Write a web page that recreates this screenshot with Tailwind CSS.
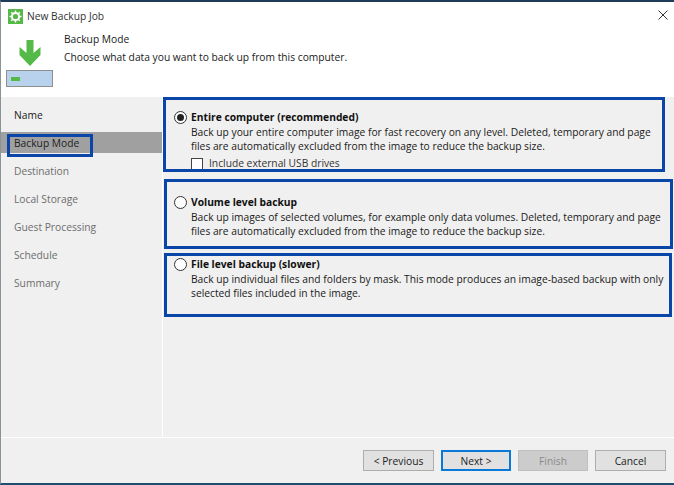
<!DOCTYPE html>
<html lang="en">
<head>
  <meta charset="UTF-8" />
  <title>New Backup Job</title>
  <script src="https://cdn.jsdelivr.net/npm/@tailwindcss/browser@4"></script>
</head>
<body class="m-0 bg-white text-[10.25px] leading-[15px] text-[#1a1a1a] font-['Open_Sans','Noto_Sans',sans-serif] overflow-hidden">
  <div class="relative w-[674px] h-[485px] flex flex-col border-t-[2px] border-t-[#1f3b57] border-b-[2px] border-b-[#1f4e6e] border-l border-l-[#8a929a] overflow-hidden">

    <!-- title + header -->
    <header class="h-[95px] shrink-0 bg-white relative">
      <div class="flex items-center gap-[4px] pl-[7px] pt-[6px]">
        <svg width="15" height="15" viewBox="0 0 15 15"><rect width="15" height="15" fill="#54b948"/><circle cx="7.5" cy="7.5" r="3.6" fill="none" stroke="#fff" stroke-width="2"/><path d="M7.5 1.5v2.5M7.5 11v2.5M1.5 7.5h2.5M11 7.5h2.5M3.2 3.2l1.8 1.8M10 10l1.8 1.8M11.8 3.200L10 5M5 10l-1.8 1.8" stroke="#fff" stroke-width="1.4"/></svg>
        <span class="text-[#333] pt-[1px]">New Backup Job</span>
      </div>
      <svg class="absolute right-[6px] top-[8px]" width="10" height="10" viewBox="0 0 10 10"><path d="M.5.5l9 9M9.5.5l-9 9" stroke="#333" fill="none"/></svg>
      <div class="flex mt-[7px]">
        <div class="w-[63px] pl-[5px] pt-[9px] shrink-0">
          <svg class="ml-[11px]" width="26" height="27" viewBox="0 0 26 27"><path d="M9.500 0h7v13l7-6v8L13 26 2.500 15V7l7 6z" fill="#54b948"/></svg>
          <div class="mt-[3px] w-[47px] h-[17px] bg-[#b8d1ec] border border-[#8f8f8f] flex items-center pl-[4px]"><span class="block w-[9px] h-[4px] bg-[#54b948]"></span></div>
        </div>
        <div>
          <div class="mt-[1px] h-[18px] text-[#222]">Backup Mode</div>
          <div class="text-[#222]">Choose what data you want to back up from this computer.</div>
        </div>
      </div>
    </header>

    <div class="flex flex-1 min-h-0 bg-[#f0f0f0]">
      <!-- steps -->
      <nav class="w-[161px] shrink-0 pt-[3px]">
        <div class="h-[28px] pt-[2px] pl-[13px] flex items-center text-[#222]">Name</div>
        <div class="h-[21px] mt-[4px] pt-[2px] pl-[13px] flex items-center text-[#222] bg-[#a0a0a0]">Backup Mode</div>
        <div class="h-[28px] mt-[4px] pl-[13px] flex items-center text-[#6d6d6d]">Destination</div>
        <div class="h-[28px] pl-[13px] flex items-center text-[#6d6d6d]">Local Storage</div>
        <div class="h-[28px] pl-[13px] flex items-center text-[#6d6d6d]">Guest Processing</div>
        <div class="h-[28px] pl-[13px] flex items-center text-[#6d6d6d]">Schedule</div>
        <div class="h-[28px] pl-[13px] flex items-center text-[#6d6d6d]">Summary</div>
      </nav>

      <div class="flex-1 flex flex-col border-l border-l-white">
        <!-- options -->
        <main class="h-[339px] shrink-0 pl-[11px] pt-[13px]">
          <section class="h-[85px]">
            <div class="flex items-center gap-[4px] h-[15px]">
              <span class="w-[13px] h-[13px] rounded-full border border-[#333] bg-white flex items-center justify-center"><span class="w-[7px] h-[7px] rounded-full bg-[#222]"></span></span>
              <span class="font-bold text-[#111]">Entire computer (recommended)</span>
            </div>
            <p class="pl-[17px] leading-[14px] whitespace-nowrap">Back up your entire computer image for fast recovery on any level. Deleted, temporary and page<br>files are automatically excluded from the image to reduce the backup size.</p>
            <label class="flex items-center gap-[6px] pl-[17px] mt-[4px] h-[13px] text-[#333]"><span class="w-[12px] h-[12px] border border-[#444] bg-white"></span>Include external USB drives</label>
          </section>
          <section class="h-[62px]">
            <div class="flex items-center gap-[4px] h-[15px]">
              <span class="w-[13px] h-[13px] rounded-full border border-[#333] bg-white"></span>
              <span class="font-bold text-[#111]">Volume level backup</span>
            </div>
            <p class="pl-[17px] leading-[14px] whitespace-nowrap">Back up images of selected volumes, for example only data volumes. Deleted, temporary and page<br>files are automatically excluded from the image to reduce the backup size.</p>
          </section>
          <section>
            <div class="flex items-center gap-[4px] h-[15px]">
              <span class="w-[13px] h-[13px] rounded-full border border-[#333] bg-white"></span>
              <span class="font-bold text-[#111]">File level backup (slower)</span>
            </div>
            <p class="pl-[17px] leading-[14px] whitespace-nowrap">Back up individual files and folders by mask. This mode produces an image-based backup with only<br>selected files included in the image.</p>
          </section>
        </main>
      </div>
    </div>

    <!-- buttons -->
    <footer class="absolute left-0 right-0 bottom-0 h-[46px] bg-[#f0f0f0] border-t border-t-white flex justify-end gap-[7px] pt-[12px] pr-[8px]">
      <button class="w-[71px] h-[21px] pt-[1px] bg-[#e1e1e1] border border-[#adadad] text-[#222]">&lt; Previous</button>
      <button class="w-[70px] h-[21px] pt-[1px] bg-[#e1e1e1] border-2 border-[#0a78d7] text-[#222]">Next &gt;</button>
      <button class="w-[70px] h-[21px] pt-[1px] bg-[#cccccc] border border-[#bfbfbf] text-[#8a8a8a]">Finish</button>
      <button class="w-[71px] h-[21px] pt-[1px] bg-[#e1e1e1] border border-[#adadad] text-[#222]">Cancel</button>
    </footer>

    <!-- annotation boxes drawn on top of the screenshot -->
    <div class="absolute left-[6px] top-[132px] w-[86px] h-[23px] border-[3px] border-[#0a45a8]"></div>
    <div class="absolute left-[162px] top-[95px] w-[502px] h-[75px] border-[3px] border-[#0a45a8]"></div>
    <div class="absolute left-[163px] top-[177px] w-[509px] h-[70px] border-[3px] border-[#0a45a8]"></div>
    <div class="absolute left-[163px] top-[251px] w-[508px] h-[64px] border-[3px] border-[#0a45a8]"></div>
  </div>
</body>
</html>
